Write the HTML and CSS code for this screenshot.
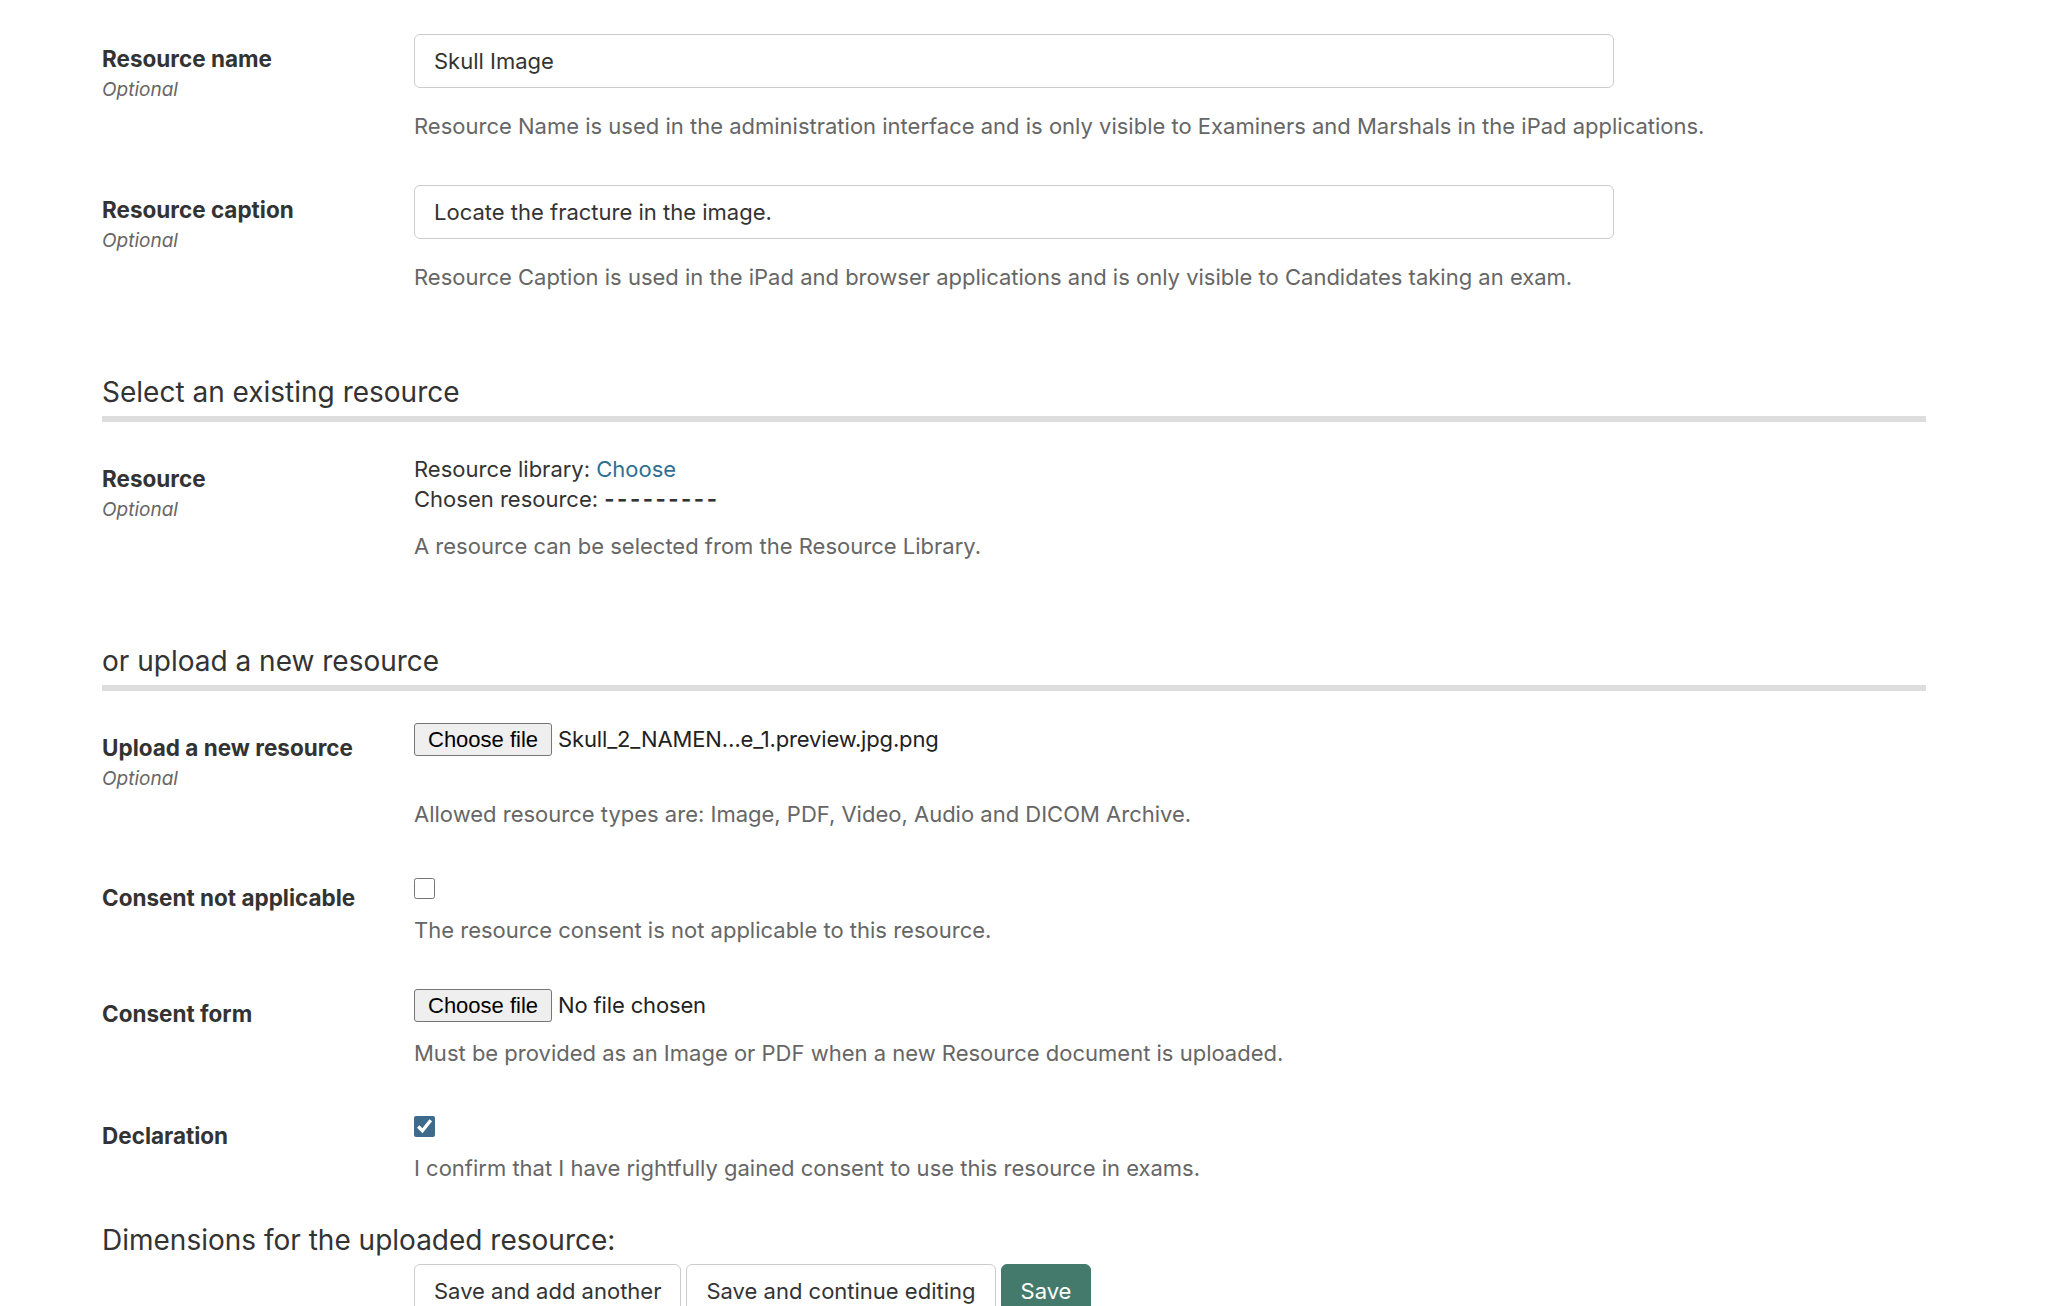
FILE: index.html
```html
<!DOCTYPE html>
<html lang="en">
<head>
    <meta charset="UTF-8">
    <meta name="viewport" content="width=device-width, initial-scale=1.0">
    <title>Change resource</title>
    <link rel="stylesheet" href="styles.css">
</head>
<body>

    <form class="resource-form" onsubmit="return false">

        <div class="form-row">
            <div class="form-label">
                <label for="id_name">Resource name</label>
                <span class="optional">Optional</span>
            </div>
            <div class="form-field">
                <input type="text" id="id_name" class="text-input" value="Skull Image">
                <p class="help help-input">Resource Name is used in the administration interface and is only visible to Examiners and Marshals in the iPad applications.</p>
            </div>
        </div>

        <div class="form-row">
            <div class="form-label">
                <label for="id_caption">Resource caption</label>
                <span class="optional">Optional</span>
            </div>
            <div class="form-field">
                <input type="text" id="id_caption" class="text-input" value="Locate the fracture in the image.">
                <p class="help help-input">Resource Caption is used in the iPad and browser applications and is only visible to Candidates taking an exam.</p>
            </div>
        </div>

        <h2 class="section-title">Select an existing resource</h2>

        <div class="form-row">
            <div class="form-label">
                <label>Resource</label>
                <span class="optional">Optional</span>
            </div>
            <div class="form-field">
                <div class="field-line">Resource library: <a href="#" class="link">Choose</a></div>
                <div class="field-line">Chosen resource: <span class="empty-value">---------</span></div>
                <p class="help">A resource can be selected from the Resource Library.</p>
            </div>
        </div>

        <h2 class="section-title">or upload a new resource</h2>

        <div class="form-row">
            <div class="form-label">
                <label for="id_file">Upload a new resource</label>
                <span class="optional">Optional</span>
            </div>
            <div class="form-field">
                <label class="file-field" for="id_file">
                    <span class="file-btn">Choose file</span>
                    <span class="file-name">Skull_2_NAMEN…e_1.preview.jpg.png</span>
                </label>
                <input type="file" id="id_file" class="file-input">
                <p class="help help-upload">Allowed resource types are: Image, PDF, Video, Audio and DICOM Archive.</p>
            </div>
        </div>

        <div class="form-row">
            <div class="form-label">
                <label for="id_consent_na">Consent not applicable</label>
            </div>
            <div class="form-field">
                <input type="checkbox" id="id_consent_na" class="checkbox">
                <p class="help">The resource consent is not applicable to this resource.</p>
            </div>
        </div>

        <div class="form-row">
            <div class="form-label">
                <label for="id_consent">Consent form</label>
            </div>
            <div class="form-field">
                <label class="file-field" for="id_consent">
                    <span class="file-btn">Choose file</span>
                    <span class="file-name">No file chosen</span>
                </label>
                <input type="file" id="id_consent" class="file-input">
                <p class="help">Must be provided as an Image or PDF when a new Resource document is uploaded.</p>
            </div>
        </div>

        <div class="form-row">
            <div class="form-label">
                <label for="id_declaration">Declaration</label>
            </div>
            <div class="form-field">
                <input type="checkbox" id="id_declaration" class="checkbox" checked>
                <p class="help">I confirm that I have rightfully gained consent to use this resource in exams.</p>
            </div>
        </div>

        <h3 class="dimensions-title">Dimensions for the uploaded resource:</h3>

        <div class="submit-row">
            <button type="submit" class="btn">Save and add another</button>
            <button type="submit" class="btn">Save and continue editing</button>
            <button type="submit" class="btn btn-primary">Save</button>
        </div>

    </form>

</body>
</html>
```

FILE: styles.css
```css
body {
    margin: 0;
    background: #ffffff;
    color: #333333;
    font-family: Inter, "Noto Sans", sans-serif;
    font-size: 22px;
    line-height: 1.4;
}
.resource-form {
    width: 1824px;
    padding: 34px 0 0 102px;
}
.form-row {
    display: grid;
    grid-template-columns: 312px 1fr;
    margin-bottom: 43px;
}
.form-label {
    padding-top: 11px;
}
.form-label label {
    display: block;
    font-size: 22.5px;
    font-weight: 700;
    line-height: 28px;
    color: #333333;
}
.optional {
    display: block;
    margin-top: 4px;
    font-size: 19px;
    font-style: italic;
    line-height: 26px;
    color: #666666;
}
.text-input {
    display: block;
    box-sizing: border-box;
    width: 1200px;
    height: 54px;
    margin: 0;
    padding: 0 19px;
    border: 1px solid #cccccc;
    border-radius: 6px;
    font-family: inherit;
    font-size: 22px;
    color: #333333;
    background: #ffffff;
}
.help {
    margin: 16px 0 0;
    color: #666666;
}
.help-input {
    margin-top: 23px;
}
.help-upload {
    margin-top: 43px;
}
.link {
    color: #306f93;
    text-decoration: none;
}
.empty-value {
    font-weight: 700;
    letter-spacing: 2.5px;
}
/* margin-top collapses with the row margin above */
.section-title {
    margin: 81px 0 32px;
    padding-bottom: 6px;
    border-bottom: 6px solid #dddddd;
    font-size: 28px;
    font-weight: 400;
    line-height: 36px;
    color: #333333;
}
/* fake file picker, the real input stays hidden */
.file-field {
    display: flex;
    align-items: center;
    gap: 6px;
    height: 33px;
    cursor: pointer;
}
.file-btn {
    box-sizing: border-box;
    height: 33px;
    padding: 0 13px;
    border: 1px solid #767676;
    border-radius: 3px;
    background: #efefef;
    color: #000000;
    font-family: "Liberation Sans", Arial, sans-serif;
    font-size: 22px;
    line-height: 31px;
}
.file-name {
    color: #222222;
    letter-spacing: -0.15px;
}
.file-input {
    display: none;
}
.checkbox {
    display: block;
    width: 21px;
    height: 21px;
    margin: 5px 0 0;
    accent-color: #3e6b8c;
}
.dimensions-title {
    margin: -5px 0 6px;
    font-size: 28px;
    font-weight: 400;
    line-height: 36px;
    color: #333333;
}
.submit-row {
    display: flex;
    gap: 5px;
    padding-left: 312px;
}
.btn {
    height: 54px;
    padding: 0 19px;
    border: 1px solid #cccccc;
    border-radius: 6px;
    background: #ffffff;
    color: #333333;
    font-family: inherit;
    font-size: 22px;
    cursor: pointer;
}
.btn-primary {
    background: #447a6c;
    border-color: #447a6c;
    color: #ffffff;
}
```
